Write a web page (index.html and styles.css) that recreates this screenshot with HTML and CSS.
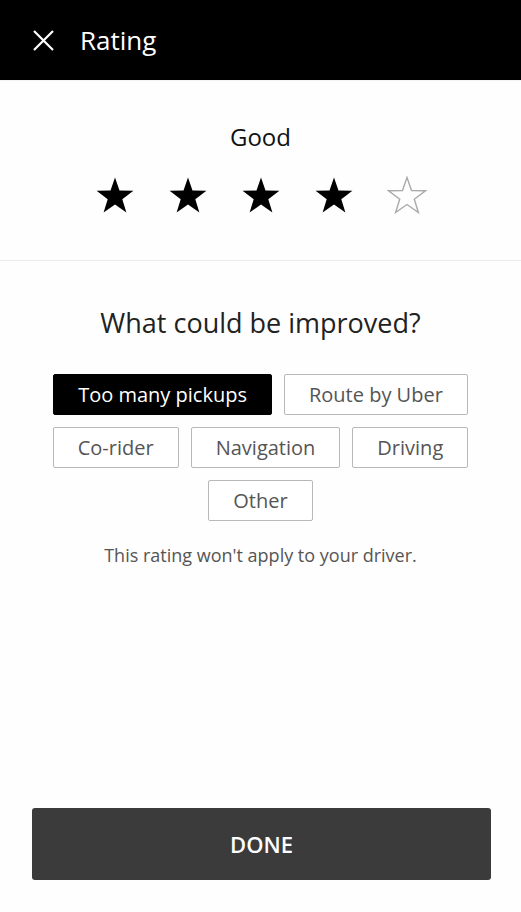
FILE: index.html
```html
<!DOCTYPE html>
<html lang="en">

<head>
  <meta charset="UTF-8">
  <meta name="viewport" content="width=device-width, initial-scale=1.0">
  <title>Rating</title>
  <link rel="stylesheet" href="styles.css">
</head>

<body>
  <header class="top-bar">
    <button class="close-btn" aria-label="Close">
      <svg width="21" height="21" viewBox="0 0 21 21">
        <path d="M1 1 L20 20 M20 1 L1 20" stroke="#fff" stroke-width="2.2" fill="none" />
      </svg>
    </button>
    <h1>Rating</h1>
  </header>

  <section class="rating-box">
    <p class="rating-label">Good</p>
    <div class="stars">
      <svg class="star" viewBox="0 0 40 40"><path d="M20 1.5 L24.5 14.6 L38.4 14.8 L27.3 23.2 L31.4 36.5 L20 28.5 L8.6 36.5 L12.7 23.2 L1.6 14.8 L15.5 14.6 Z" /></svg>
      <svg class="star" viewBox="0 0 40 40"><path d="M20 1.5 L24.5 14.6 L38.4 14.8 L27.3 23.2 L31.4 36.5 L20 28.5 L8.6 36.5 L12.7 23.2 L1.6 14.8 L15.5 14.6 Z" /></svg>
      <svg class="star" viewBox="0 0 40 40"><path d="M20 1.5 L24.5 14.6 L38.4 14.8 L27.3 23.2 L31.4 36.5 L20 28.5 L8.6 36.5 L12.7 23.2 L1.6 14.8 L15.5 14.6 Z" /></svg>
      <svg class="star" viewBox="0 0 40 40"><path d="M20 1.5 L24.5 14.6 L38.4 14.8 L27.3 23.2 L31.4 36.5 L20 28.5 L8.6 36.5 L12.7 23.2 L1.6 14.8 L15.5 14.6 Z" /></svg>
      <svg class="star empty" viewBox="0 0 40 40"><path d="M20 1.5 L24.5 14.6 L38.4 14.8 L27.3 23.2 L31.4 36.5 L20 28.5 L8.6 36.5 L12.7 23.2 L1.6 14.8 L15.5 14.6 Z" /></svg>
    </div>
  </section>

  <section class="improve-box">
    <h2>What could be improved?</h2>
    <div class="chips">
      <div class="chip-row">
        <button class="chip selected">Too many pickups</button>
        <button class="chip">Route by Uber</button>
      </div>
      <div class="chip-row">
        <button class="chip">Co-rider</button>
        <button class="chip">Navigation</button>
        <button class="chip">Driving</button>
      </div>
      <div class="chip-row">
        <button class="chip">Other</button>
      </div>
    </div>
    <p class="note">This rating won't apply to your driver.</p>
  </section>

  <button class="done-btn">DONE</button>
</body>

</html>
```

FILE: styles.css
```css
* {
  box-sizing: border-box;
}

body {
  margin: 0;
  min-height: 100vh;
  display: flex;
  flex-direction: column;
  background: #fefefe;
  font-family: "Open Sans", "Noto Sans", sans-serif;
  color: #111;
}

.top-bar {
  height: 80px;
  background: #000;
  display: flex;
  align-items: center;
  padding-left: 33px;
  gap: 26px;
  border-bottom: 1px solid #f4f4f4;
  box-sizing: content-box;
}

.close-btn {
  background: none;
  border: none;
  padding: 0;
  width: 21px;
  height: 21px;
  display: flex;
}

.top-bar h1 {
  margin: 0;
  color: #fff;
  font-size: 26px;
  font-weight: 400;
  line-height: 34px;
}

.rating-box {
  padding: 40px 0 44px;
  border-bottom: 1px solid #ececec;
  text-align: center;
}

.rating-label {
  margin: 0;
  font-size: 24px;
  line-height: 32px;
  color: #111;
}

.stars {
  display: flex;
  justify-content: center;
  gap: 33px;
  margin-top: 23px;
}

.star {
  width: 40px;
  height: 40px;
  fill: #000;
}

.star.empty {
  fill: none;
  stroke: #aaa;
  stroke-width: 1.4;
}

.improve-box {
  text-align: center;
  padding-top: 45px;
}

.improve-box h2 {
  margin: 0;
  font-size: 27px;
  font-weight: 400;
  line-height: 34px;
  color: #222;
}

.chips {
  display: flex;
  flex-direction: column;
  gap: 12px;
  margin-top: 34px;
}

.chip-row {
  display: flex;
  justify-content: center;
  gap: 12px;
}

.chip {
  height: 41px;
  padding: 0 24px;
  border: 1px solid #b8b8b8;
  border-radius: 2px;
  background: #fff;
  color: #555;
  font-family: inherit;
  font-size: 20px;
}

.chip.selected {
  background: #000;
  border-color: #000;
  color: #fff;
}

.note {
  margin: 22px 0 0;
  font-size: 18px;
  line-height: 24px;
  color: #555;
}

.done-btn {
  margin: auto 30px 32px 32px;
  height: 72px;
  border: none;
  border-radius: 3px;
  background: #3b3b3b;
  color: #fff;
  font-family: inherit;
  font-size: 22px;
  font-weight: 600;
}
```
